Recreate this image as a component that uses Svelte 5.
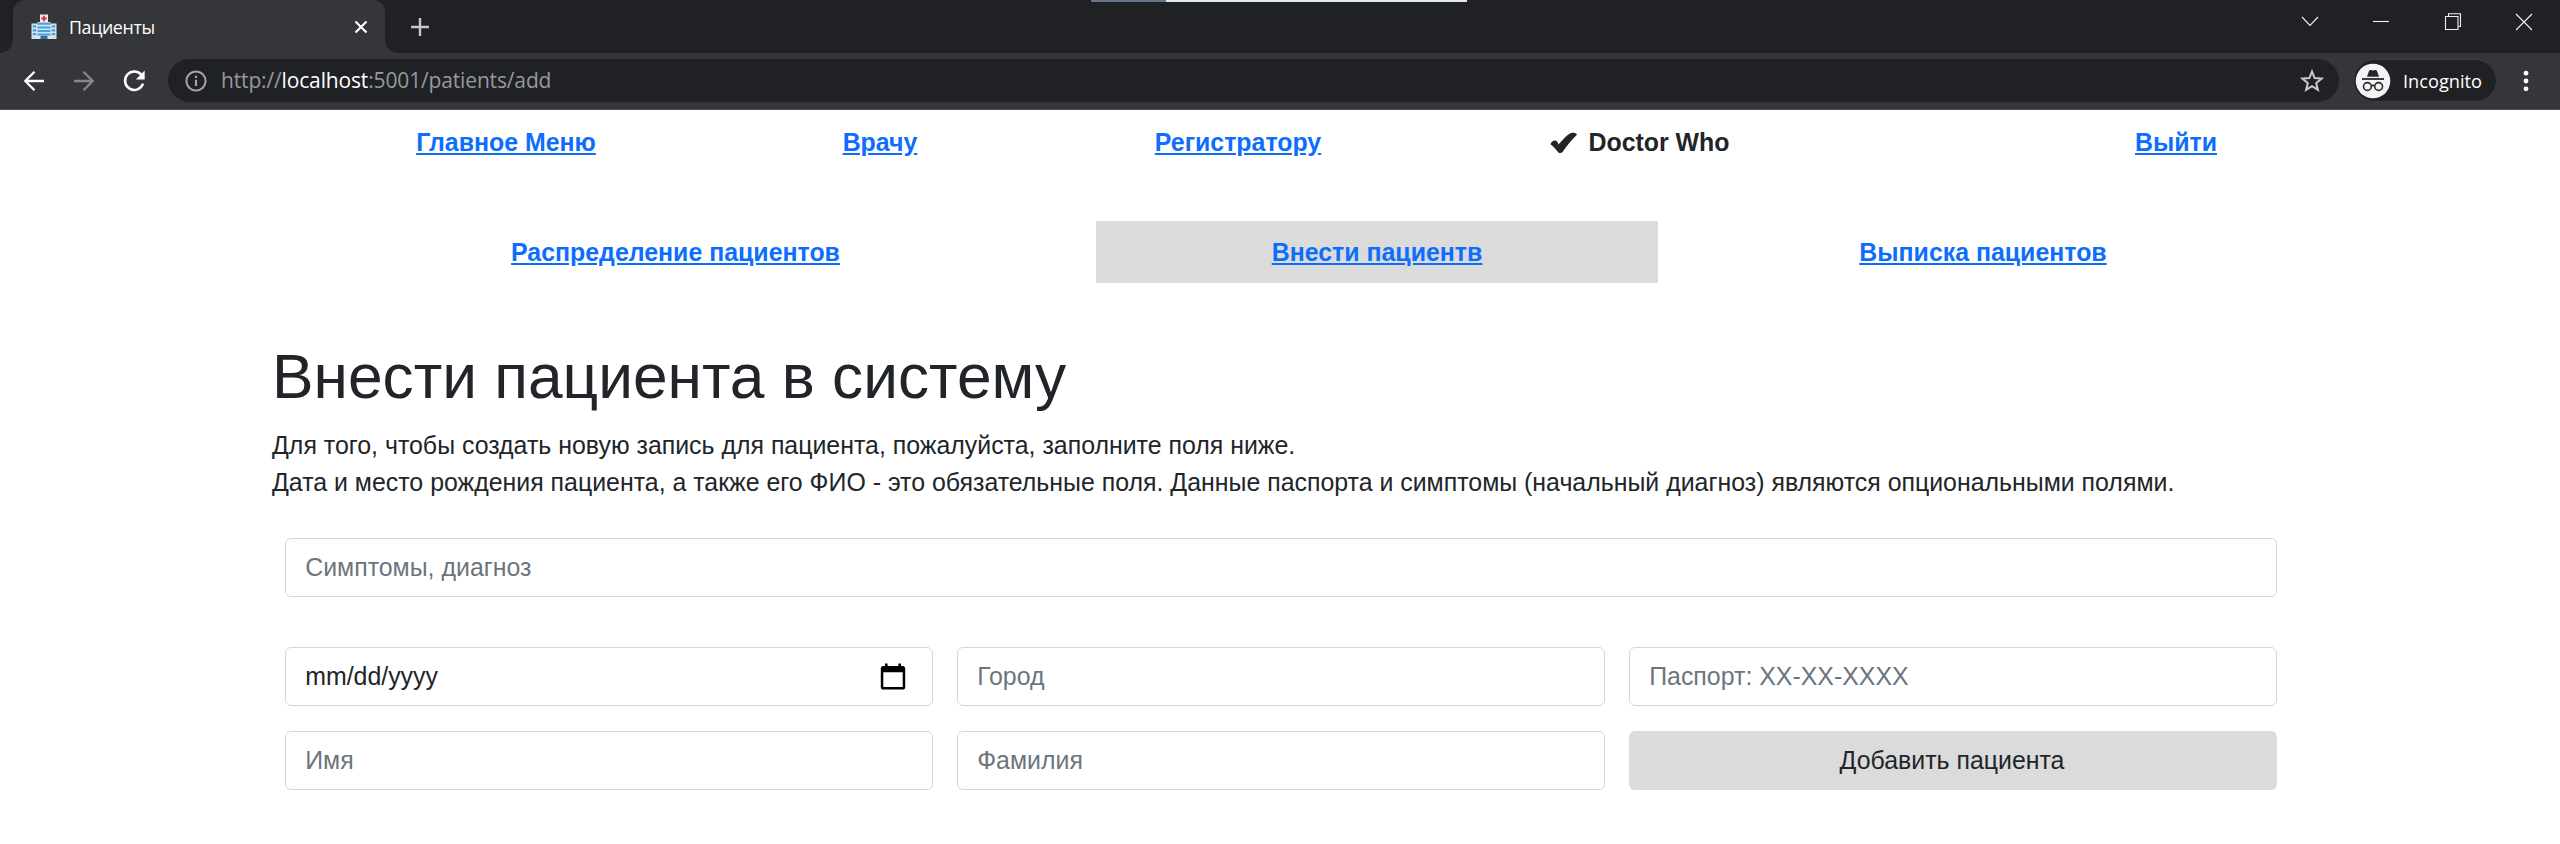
<script>
  const subnav = [
    { label: 'Распределение пациентов', active: false },
    { label: 'Внести пациентв', active: true },
    { label: 'Выписка пациентов', active: false }
  ];
</script>

<div class="window">
  <header class="tabstrip">
    <div class="loading"></div>
    <div class="tab">
      <svg class="favicon" width="26" height="26" viewBox="0 0 26 26">
        <path d="M9 0.5h8v9H9z" fill="#f3e8ec" />
        <path d="M13 1.8v5.4M10.3 4.5h5.4" stroke="#dc2f45" stroke-width="1.8" />
        <path d="M0.5 9.5h6V8h13v1.5h6V25H0.5z" fill="#d3e3ee" />
        <path d="M6.5 9.8h13M6.5 13.4h13M6.5 17h13M6.5 20.6h13" stroke="#4a9fdc" stroke-width="2" />
        <path d="M1.8 12.4h3.4M1.8 16.3h3.4M1.8 20.2h3.4M20.8 12.4h3.4M20.8 16.3h3.4M20.8 20.2h3.4" stroke="#4a9fdc" stroke-width="2.2" />
        <path d="M9.5 21.8h7V25h-7z" fill="#2f7299" />
      </svg>
      <span class="title">Пациенты</span>
      <svg class="tab-close" width="14" height="14" viewBox="0 0 14 14"><path d="M1.5 1.5l11 11M12.5 1.5l-11 11" stroke="#fff" stroke-width="2.2" /></svg>
    </div>
    <svg class="plus" width="20" height="20" viewBox="0 0 20 20"><path d="M10 1v18M1 10h18" stroke="#c6c8cb" stroke-width="2.4" /></svg>
    <div class="controls">
      <svg width="18" height="18" viewBox="0 0 18 18"><path d="M1 4l8 8.5L17 4" /></svg>
      <svg width="18" height="18" viewBox="0 0 18 18"><path d="M1 8.5h16" /></svg>
      <svg width="18" height="18" viewBox="0 0 18 18"><path d="M1.5 3.5h12.5v13H1.5zM4.5 3.5V0.7h12V13.5h-2.5" /></svg>
      <svg width="18" height="18" viewBox="0 0 18 18"><path d="M1 1l16 16M17 1L1 17" /></svg>
    </div>
  </header>

  <div class="toolbar">
    <svg class="back" width="22" height="22" viewBox="0 0 22 22"><path d="M21 11H2.5M11.5 1.8L2.3 11l9.2 9.2" fill="none" stroke="#fff" stroke-width="2.3" /></svg>
    <svg class="forward" width="22" height="22" viewBox="0 0 22 22"><path d="M1 11h18.5M10.5 1.8l9.2 9.2-9.2 9.2" fill="none" stroke="#85878a" stroke-width="2.3" /></svg>
    <svg class="reload" width="24" height="24" viewBox="0 0 24 24">
      <path d="M19.8 6.4A9.2 9.2 0 1 0 21 14.6" fill="none" stroke="#fff" stroke-width="2.5" />
      <path d="M22.7 1.6v8.8h-8.8z" fill="#fff" />
    </svg>
    <div class="omnibox">
      <svg width="22" height="22" viewBox="0 0 22 22">
        <circle cx="11" cy="11" r="9.6" fill="none" stroke="#a0a3a7" stroke-width="2" />
        <path d="M11 9.8v6.2M11 5.8v2.2" stroke="#a0a3a7" stroke-width="2.2" />
      </svg>
      <span class="url">http://<b>localhost</b>:5001/patients/add</span>
      <svg class="star" width="24" height="24" viewBox="0 0 24 24"><path d="M12 2.6l2.6 6.5 7 .5-5.4 4.5 1.7 6.8L12 17.2l-5.900 3.7 1.7-6.8-5.4-4.5 7-.5z" fill="none" stroke="#c8cacd" stroke-width="2" /></svg>
    </div>
    <div class="profile">
      <svg width="36" height="36" viewBox="0 0 36 36">
        <circle cx="18" cy="18" r="17.3" fill="#f1f3f4" />
        <path d="M12 13.8l2-5.8c.3-1 1-1.3 1.9-1l2.1.6 2.1-.6c.9-.3 1.6 0 1.9 1l2 5.8z" fill="#26282b" />
        <path d="M7 16h22" stroke="#26282b" stroke-width="1.8" />
        <g fill="none" stroke="#26282b" stroke-width="1.6"><circle cx="12.4" cy="23.5" r="3.9" /><circle cx="23.6" cy="23.5" r="3.9" /><path d="M16.3 23c1-.8 2.4-.8 3.4 0" /></g>
      </svg>
      <span>Incognito</span>
    </div>
    <svg class="dots" width="6" height="22" viewBox="0 0 6 22" fill="#fff"><circle cx="3" cy="3.2" r="2.4" /><circle cx="3" cy="11" r="2.4" /><circle cx="3" cy="18.8" r="2.4" /></svg>
  </div>

  <main>
    <nav class="mainnav">
      <a href="#menu">Главное Меню</a>
      <a href="#doctor">Врачу</a>
      <a href="#registry">Регистратору</a>
      <span class="user">
        <svg width="28" height="22" viewBox="0 0 28 22"><path d="M.7 12.4c0-1.8 2.3-3.800 4.200-3.800 1.700 0 2.900 1.400 3.600 4C12.800 7.400 17.200 2.600 21 .9c2.500-.5 4.800.1 6.200 1.500C21.400 8 16.400 14 12.400 20.300c-1.200 1-2.900 1.100-4 .2C6.300 17.500 3.700 14.800.7 12.400z" fill="#212529" /></svg>
        Doctor Who
      </span>
      <span></span>
      <a href="#logout">Выйти</a>
    </nav>
    <nav class="subnav">
      {#each subnav as item}
        <div class:active={item.active}><a href="#section">{item.label}</a></div>
      {/each}
    </nav>

    <section>
      <h1>Внести пациента в систему</h1>
      <p>Для того, чтобы создать новую запись для пациента, пожалуйста, заполните поля ниже.</p>
      <p>Дата и место рождения пациента, а также его ФИО - это обязательные поля. Данные паспорта и симптомы (начальный диагноз) являются опциональными полями.</p>
      <form>
        <div class="field wide">Симптомы, диагноз</div>
        <div class="field date">
          <span>mm/dd/yyyy</span>
          <svg width="26" height="27" viewBox="0 0 26 27"><path d="M5 .5h2.6v2.6h10.8V.5H21v2.6h1.9c1.3 0 2.3 1 2.3 2.4v18.7c0 1.4-1 2.4-2.3 2.4H3.1C1.8 26.600.8 25.6.8 24.2V5.5c0-1.4 1-2.4 2.3-2.4H5zM3.3 9.2v14.9h19.4V9.2z" fill="#000" fill-rule="evenodd" /></svg>
        </div>
        <div class="field">Город</div>
        <div class="field">Паспорт: XX-XX-XXXX</div>
        <div class="field">Имя</div>
        <div class="field">Фамилия</div>
        <button type="button">Добавить пациента</button>
      </form>
    </section>
  </main>
</div>

<style>
  :global(body) { margin: 0; background: #fff; }
  .window { width: 2560px; height: 844px; overflow: hidden; position: relative; background: #fff; }
  svg { display: block; flex: none; }

  .tabstrip { height: 53px; display: flex; align-items: flex-start; background: #202124; box-sizing: border-box; padding-left: 13px; }
  .loading { position: absolute; top: 0; left: 1091px; width: 376px; height: 2px; background: linear-gradient(90deg, #66758a 75px, #e4e9ec 75px); }
  .tab { position: relative; width: 372px; height: 53px; box-sizing: border-box; padding: 0 17px 0 18px; display: flex; align-items: center; background: #35363a; border-radius: 12px 12px 0 0; }
  .tab::before, .tab::after { content: ''; position: absolute; bottom: 0; width: 13px; height: 13px; }
  .tab::before { left: -13px; background: radial-gradient(circle at 0 0, transparent 12.5px, #35363a 13px); }
  .tab::after { right: -13px; background: radial-gradient(circle at 100% 0, transparent 12.5px, #35363a 13px); }
  .title { margin-left: 12px; flex: 1; font: 17.8px 'Open Sans', sans-serif; letter-spacing: -0.35px; color: #fff; }
  .plus { margin: 16.5px 0 0 25px; }
  .controls { margin: 13px 27px 0 auto; display: flex; gap: 53.3px; }
  .controls path { fill: none; stroke: #eef0f1; stroke-width: 1.1; }

  .toolbar { height: 57px; box-sizing: border-box; padding: 0 31px 1px 23px; display: flex; align-items: center; background: #35363a; border-bottom: 1px solid #4a4b4f; }
  .forward { margin-left: 28px; }
  .reload { margin-left: 27px; }
  .omnibox { margin-left: 22px; width: 2171px; height: 43px; box-sizing: border-box; padding: 0 15px 0 17px; border-radius: 22px; background: #202124; display: flex; align-items: center; }
  .url { margin-left: 14px; flex: 1; padding-bottom: 1px; font: 21px 'Open Sans', sans-serif; letter-spacing: -0.15px; color: #96999d; white-space: nowrap; }
  .url b { font-weight: 400; color: #fff; }
  .profile { margin-left: 14px; width: 144px; height: 43px; box-sizing: border-box; border: 1.5px solid #3d3e42; border-radius: 22px; background: #202124; display: flex; align-items: center; padding-left: 1px; }
  .profile span { margin-left: 12px; font: 18.2px 'Open Sans', sans-serif; color: #fff; }
  .dots { margin-left: auto; }

  main { padding: 1.5px 252px 0 255px; font: 24.9px/37.35px 'Liberation Sans', Arial, sans-serif; color: #212529; }
  a { color: #0d6efd; text-decoration: underline; }
  .mainnav { display: grid; grid-template-columns: 502px 246px 470px 334px 237px 264px; height: 62.2px; align-items: center; justify-items: center; font-weight: 700; }
  .user { display: flex; align-items: center; gap: 10px; white-space: nowrap; }
  .subnav { margin-top: 47.4px; display: grid; grid-template-columns: 841px 562px 650px; font-weight: 700; text-align: center; }
  .subnav div { height: 62.3px; box-sizing: border-box; padding-top: 12.7px; }
  .subnav .active { background: #dbdbdb; }

  section { padding: 56.2px 18px 0 17px; }
  h1 { margin: 0 0 12.4px; font-size: 62.25px; line-height: 74.7px; font-weight: 500; }
  p { margin: 0; white-space: nowrap; }
  form { margin-top: 36.5px; padding: 0 13px; display: grid; grid-template-columns: repeat(3, 648px); grid-template-rows: repeat(3, auto); column-gap: 24px; row-gap: 24.8px; }
  .field { height: 59.5px; box-sizing: border-box; border: 1.5px solid #d3d7db; border-radius: 6px; padding: 0 18.6px 0 19.2px; display: flex; align-items: center; color: #6c757d; }
  .wide { grid-column: 1 / -1; margin-bottom: 24.5px; }
  .date { color: #212529; justify-content: space-between; padding-right: 26px; }
  button { height: 59.5px; margin: 0; padding: 0 2px 0 0; border: 0; border-radius: 6px; background: #dbdbdb; color: #212529; font: inherit; }
</style>
